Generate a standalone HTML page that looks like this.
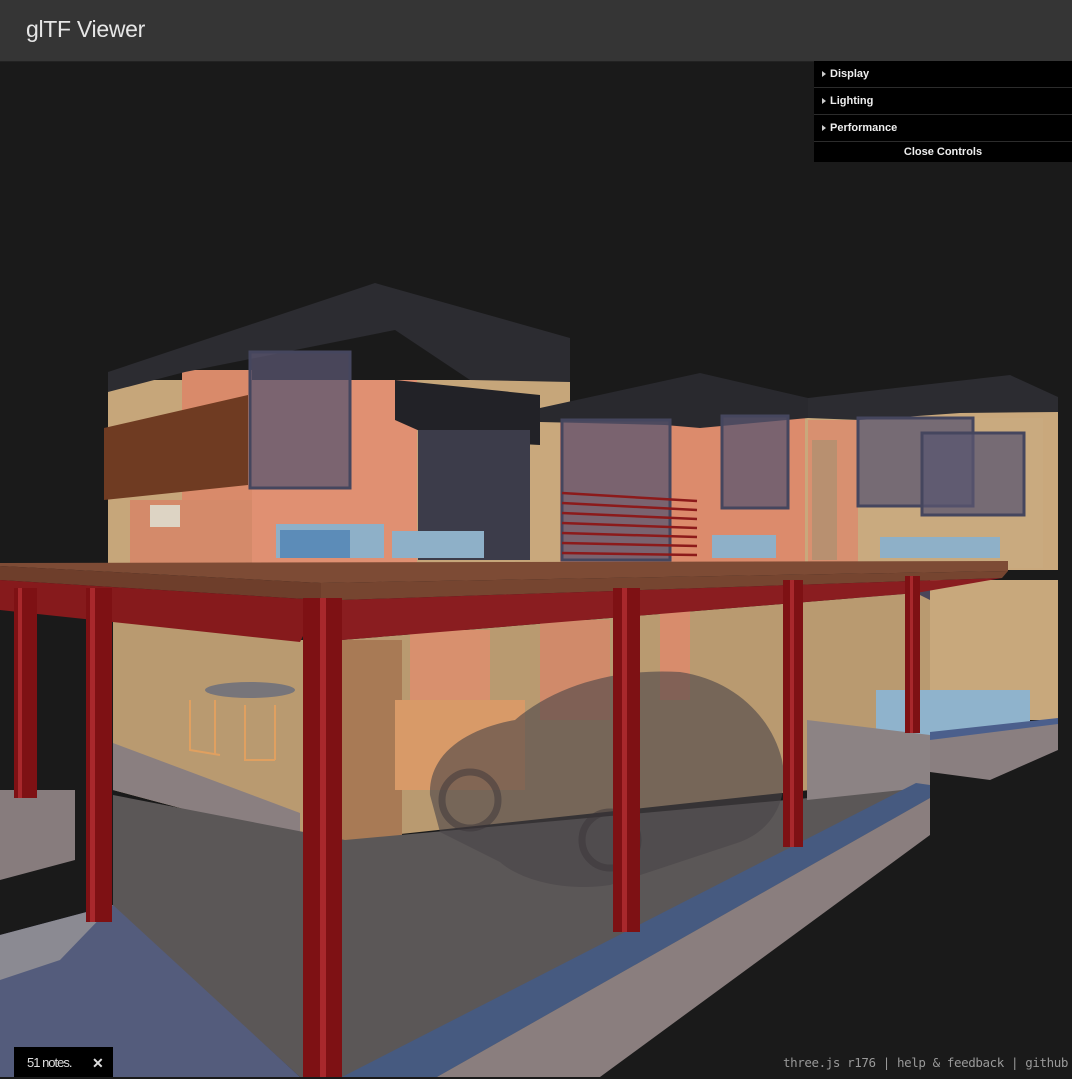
<!DOCTYPE html>
<html><head><meta charset="utf-8"><style>
html,body{margin:0;padding:0;width:1072px;height:1077px;overflow:hidden;background:#1a1a1a;font-family:"Liberation Sans",sans-serif}
#hdr{position:absolute;left:0;top:0;width:1072px;height:61px;background:#353535;border-bottom:1px solid #222}
#hdr span{position:absolute;left:26px;top:16px;font-size:23px;color:#e6e6e6;font-weight:300;letter-spacing:-0.3px}
#gui{position:absolute;left:814px;top:61px;width:258px;background:#000;font-size:11px;font-weight:bold;color:#eee}
#gui .r{height:26px;border-bottom:1px solid #2c2c2c;line-height:26px;padding-left:16px;position:relative}
#gui .r:before{content:"";position:absolute;left:8px;top:10px;border-left:4px solid #ccc;border-top:3px solid transparent;border-bottom:3px solid transparent}
#gui .c{height:20px;line-height:20px;text-align:center}
#notes{position:absolute;left:14px;top:1047px;width:99px;height:30px;background:#000;color:#ddd;font-size:13px;line-height:32px}
#notes span{position:absolute;left:13px;letter-spacing:-1px}
#notes b{position:absolute;left:78px;font-size:14px}
#foot{position:absolute;right:4px;top:1055px;font-family:"DejaVu Sans Mono","Liberation Mono",monospace;font-size:12.5px;color:#999;letter-spacing:-0.4px}
</style></head><body>
<svg width="1072" height="1077" style="position:absolute;left:0;top:0">
<rect x="0" y="61" width="1072" height="1016" fill="#1a1a1a"/>
<rect x="108" y="380" width="462" height="185" fill="#c6a67a"/>
<rect x="540" y="405" width="518" height="165" fill="#c9a87c"/>
<rect x="182" y="370" width="70" height="195" fill="#d98a6a"/>
<rect x="130" y="500" width="165" height="65" fill="#d48a6a"/>
<rect x="252" y="380" width="165" height="185" fill="#e09072"/>
<rect x="530" y="420" width="30" height="145" fill="#c9a87c"/>
<rect x="560" y="415" width="245" height="150" fill="#dc8b6c"/>
<rect x="808" y="420" width="50" height="145" fill="#d89070"/>
<rect x="812" y="440" width="25" height="120" fill="#b89070"/>
<rect x="858" y="418" width="185" height="150" fill="#c9aa7f"/>
<polygon points="108,372 375,283 570,338 570,382 470,380 395,330 185,372 108,392" fill="#2c2c31"/>
<polygon points="395,380 540,395 540,445 440,440 395,420" fill="#222227"/>
<polygon points="540,408 700,373 808,398 808,418 700,428 665,425 540,422" fill="#29292e"/>
<polygon points="808,398 1010,375 1058,397 1058,412 960,413 860,420 808,418" fill="#2c2c31"/>
<polygon points="104,428 248,395 248,485 104,500" fill="#6f3b22"/>
<g fill="#5a5670" fill-opacity="0.75" stroke="#45465e" stroke-width="3">
<rect x="250" y="352" width="100" height="136"/>
<rect x="562" y="420" width="108" height="140"/>
<rect x="722" y="416" width="66" height="92"/>
<rect x="858" y="418" width="115" height="88"/>
<rect x="922" y="433" width="102" height="82"/>
<rect x="128" y="625" width="72" height="70"/>
<rect x="858" y="585" width="162" height="95"/>
</g>
<rect x="418" y="430" width="112" height="130" fill="#3c3c4a"/>
<g fill="#8eb0c8">
<rect x="276" y="524" width="108" height="34"/>
<rect x="392" y="531" width="92" height="27"/>
<rect x="712" y="535" width="64" height="23"/>
<rect x="880" y="537" width="120" height="21"/>
</g>
<rect x="280" y="530" width="70" height="28" fill="#5c8cb8"/>
<g stroke="#8c1a1a" stroke-width="2.5">
<line x1="562" y1="493" x2="697" y2="501"/><line x1="562" y1="503" x2="697" y2="510"/><line x1="562" y1="513" x2="697" y2="519"/><line x1="562" y1="523" x2="697" y2="528"/><line x1="562" y1="533" x2="697" y2="537"/><line x1="562" y1="543" x2="697" y2="546"/><line x1="562" y1="553" x2="697" y2="555"/>
</g>
<rect x="150" y="505" width="30" height="22" fill="#ddd4c4"/>
<polygon points="113,610 300,640 342,640 916,593 930,600 930,740 810,730 810,790 345,840 300,840 113,790" fill="#b99a70"/>
<rect x="342" y="640" width="60" height="200" fill="#a87a55"/>
<rect x="410" y="630" width="80" height="70" fill="#d8906e"/>
<rect x="540" y="620" width="70" height="100" fill="#d08a6a"/>
<rect x="660" y="610" width="30" height="90" fill="#d88c6c"/>
<rect x="395" y="700" width="130" height="90" fill="#d89a68"/>
<ellipse cx="250" cy="690" rx="45" ry="8" fill="#77757a"/>
<g stroke="#e0a060" stroke-width="2" fill="none"><path d="M190,700 l0,50 l30,5 M215,700 l0,55 M245,705 l0,55 l30,0 M275,705 l0,55"/></g>
<rect x="930" y="580" width="128" height="140" fill="#c8a87c"/>
<rect x="876" y="690" width="154" height="45" fill="#8fb3cc"/>
<polygon points="0,610 113,615 113,790 0,790" fill="#1a1a1a"/>
<polygon points="0,790 75,790 75,860 0,880" fill="#877c7d"/>
<polygon points="113,743 300,813 300,840 113,790" fill="#8a7f80"/>
<polygon points="113,795 345,840 930,787 930,800 560,1077 300,1077 113,907" fill="#5b5757"/>
<polygon points="0,935 113,905 300,1077 0,1077" fill="#545c7c"/>
<polygon points="0,935 113,905 60,960 0,980" fill="#8b8a92"/>
<polygon points="807,720 930,735 930,787 807,800" fill="#8c8384"/>
<polygon points="930,735 1058,720 1058,750 990,780 930,772" fill="#8a7f80"/>
<polygon points="930,732 1058,718 1058,724 930,740" fill="#4b5f8c"/>
<polygon points="916,783 930,785 930,798 437,1077 342,1077" fill="#465a80"/>
<polygon points="930,798 930,835 600,1077 437,1077" fill="#8a7e7e"/>
<path d="M430,795 C428,752 470,728 515,720 C555,686 615,668 680,672 C735,680 772,718 782,760 C790,800 772,830 740,842 L610,885 C565,892 520,880 500,862 L440,832 Z" fill="#4a4448" fill-opacity="0.6"/>
<circle cx="470" cy="800" r="28" fill="none" stroke="#3a3438" stroke-width="7" stroke-opacity="0.5"/>
<circle cx="610" cy="840" r="28" fill="none" stroke="#3a3438" stroke-width="7" stroke-opacity="0.5"/>
<polygon points="0,563 1008,561 1008,571 321,583 0,566" fill="#7d4b35"/>
<polygon points="0,566 321,583 321,600 0,580" fill="#6e3e2b"/>
<polygon points="321,583 1008,571 1002,578 342,600 321,600" fill="#764530"/>
<polygon points="0,580 321,600 300,642 0,610" fill="#861a1c"/>
<polygon points="342,600 1002,578 916,593 342,640" fill="#8a1d20"/>
<g fill="#7e1114">
<rect x="14" y="588" width="23" height="210"/>
<rect x="86" y="588" width="26" height="334"/>
<rect x="303" y="598" width="39" height="479"/>
<rect x="613" y="588" width="27" height="344"/>
<rect x="783" y="580" width="20" height="267"/>
<rect x="905" y="576" width="15" height="157"/>
</g>
<g fill="#a8282c">
<rect x="18" y="588" width="4" height="210"/><rect x="90" y="588" width="5" height="334"/><rect x="320" y="598" width="6" height="479"/><rect x="622" y="588" width="5" height="344"/><rect x="790" y="580" width="4" height="267"/><rect x="910" y="576" width="3" height="157"/>
</g>
</svg>
<div id="hdr"><span>glTF Viewer</span></div>
<div id="gui"><div class="r">Display</div><div class="r">Lighting</div><div class="r">Performance</div><div class="c">Close Controls</div></div>
<div id="notes"><span>51 notes.</span><b>✕</b></div>
<div id="foot">three.js r176 | help &amp; feedback | github</div>
</body></html>
